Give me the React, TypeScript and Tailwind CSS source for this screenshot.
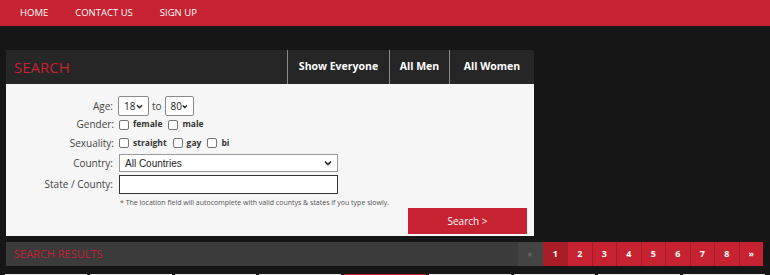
const font = { fontFamily: '"Open Sans", "Noto Sans", sans-serif' };

const pages = ["1", "2", "3", "4", "5", "6", "7", "8", "»"];

function Check({ label }: { label: string }) {
  return (
    <label className="flex items-center gap-[4px] mr-[6px]">
      <span className="inline-block h-[10px] w-[10px] rounded-[2px] border border-[#767676] bg-white" />
      <span className="text-[8.5px] font-bold text-[#333]">{label}</span>
    </label>
  );
}

function Select({ value, w }: { value: string; w: string }) {
  return (
    <div
      className={`flex h-[20px] ${w} items-center justify-between rounded-[2px] border border-[#8a8a8a] bg-white px-[5px] text-[10px] text-[#222]`}
    >
      <span>{value}</span>
      <svg width="7" height="5" viewBox="0 0 8 6">
        <path d="M1 1.5 L4 4.5 L7 1.5" stroke="#222" strokeWidth="1.8" fill="none" />
      </svg>
    </div>
  );
}

export default function App() {
  return (
    <div className="h-[275px] w-[770px] overflow-hidden bg-[#161616]" style={font}>
      {/* top nav */}
      <nav className="flex h-[26px] items-center gap-[27px] bg-[#c62231] pl-[20px] text-[9.5px] text-white">
        <span>HOME</span>
        <span>CONTACT US</span>
        <span>SIGN UP</span>
      </nav>

      {/* search panel */}
      <section className="ml-[6px] mt-[24px] w-[528px]">
        <div className="flex h-[34px] items-stretch bg-[#262626]">
          <h2 className="flex flex-1 items-center pl-[8px] text-[15px] text-[#c62231]">SEARCH</h2>
          <div className="flex w-[102px] justify-center border-l border-[#8a8a8a] items-center text-[10.5px] font-bold text-white">
            Show Everyone
          </div>
          <div className="flex border-l border-[#8a8a8a] w-[60px] justify-center items-center text-[10.5px] font-bold text-white">
            All Men
          </div>
          <div className="flex border-l border-[#8a8a8a] w-[85px] justify-center items-center text-[10.5px] font-bold text-white">
            All Women
          </div>
        </div>

        <div className="relative h-[152px] bg-[#f6f6f6] pt-[12px] text-[10px] text-[#444]">
          <div className="flex h-[20px] items-center">
            <span className="w-[112px] pr-[5px] text-right">Age:</span>
            <Select value="18" w="w-[31px]" />
            <span className="mx-[3px]">to</span>
            <Select value="80" w="w-[29px]" />
          </div>
          <div className="mt-[-1px] flex h-[19px] items-center">
            <span className="w-[113px] pr-[5px] text-right">Gender:</span>
            <Check label="female" />
            <Check label="male" />
          </div>
          <div className="flex h-[18px] items-center">
            <span className="w-[113px] pr-[5px] text-right">Sexuality:</span>
            <Check label="straight" />
            <Check label="gay" />
            <Check label="bi" />
          </div>
          <div className="mt-[2px] flex h-[18px] items-center">
            <span className="w-[113px] pr-[6px] text-right">Country:</span>
            <div className="flex h-[18px] w-[219px] items-center justify-between border border-[#9a9a9a] bg-white px-[5px] text-[10px] text-[#222]" style={{ fontFamily: '"Liberation Sans", Arial, sans-serif' }}>
              <span>All Countries</span>
              <svg width="8" height="6" viewBox="0 0 8 6">
                <path d="M1 1.5 L4 4.5 L7 1.5" stroke="#222" strokeWidth="1.6" fill="none" />
              </svg>
            </div>
          </div>
          <div className="mt-[3px] flex h-[19px] items-center">
            <span className="w-[113px] pr-[6px] text-right">State / County:</span>
            <div className="h-[19px] w-[219px] border border-[#333] bg-white" />
          </div>
          <p className="ml-[114px] mt-[4px] text-[7px] text-[#555]">
            * The location field will autocomplete with valid countys &amp; states if you type slowly.
          </p>
          <button className="absolute bottom-[2px] right-[7px] h-[26px] w-[119px] bg-[#c62231] text-[10px] text-white">
            Search &gt;
          </button>
        </div>
      </section>

      {/* results bar */}
      <div className="mt-[6px] flex h-[24px] pl-[6px] pr-[7px]">
        <div className="flex flex-1 items-center bg-[#3b3b3b] pl-[8px] text-[11px] text-[#c62231]">
          SEARCH RESULTS
        </div>
        <div className="flex w-[25px] items-center justify-center bg-[#444] text-[9px] text-[#777]">«</div>
        {pages.map((p, i) => (
          <div
            key={p}
            className={`flex w-[24.5px] items-center justify-center border-l border-[#a81c28] text-[9px] font-bold text-white ${
              i === 0 ? "bg-[#a91d29]" : "bg-[#c62231]"
            }`}
          >
            {p}
          </div>
        ))}
      </div>

      {/* result cards peeking */}
      <div className="mt-[8px] grid grid-cols-9 gap-[3px] px-[5px]">
        {Array.from({ length: 9 }).map((_, i) => (
          <div key={i} className={`h-[20px] ${i === 4 ? "bg-[#c62231]" : "bg-[#e8e8e8]"}`} />
        ))}
      </div>
    </div>
  );
}
